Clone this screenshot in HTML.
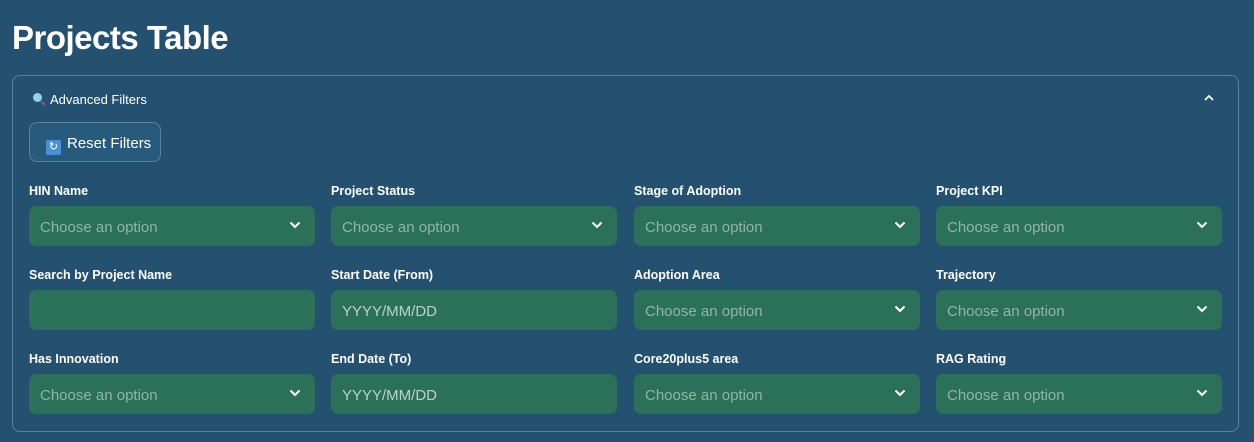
<!DOCTYPE html>
<html><head><meta charset="utf-8"><style>
*{box-sizing:border-box;margin:0;padding:0}
body{width:1254px;height:442px;background:#245170;font-family:"Liberation Sans",sans-serif;color:#fff;overflow:hidden;position:relative}
h1{position:absolute;left:12px;top:19px;font-size:33px;font-weight:bold;letter-spacing:-0.5px}
.box{position:absolute;left:12px;top:75px;width:1227px;height:357px;border:1px solid #5d7f99;border-radius:8px}
.exp{position:absolute;left:32px;top:92px;font-size:13px}
.car{position:absolute;left:1204px;top:90px;font-size:12px}
.btn{position:absolute;left:29px;top:122px;width:132px;height:40px;border:1px solid #5d7f99;border-radius:8px;background:#285a7b;font-size:15px;padding:12px 0 0 16px}
.ic{display:inline-block;width:15px;height:15px;background:#4a90d9;border-radius:2px;vertical-align:-2px;margin-right:6px;color:#fff;font-size:11px;text-align:center;line-height:15px}
.lbl{position:absolute;font-size:12.5px;font-weight:bold}
.in{position:absolute;width:286px;height:40px;background:#2b7159;border-radius:7px;font-size:15px;color:#8fb5a6;padding:13px 0 0 11px}
.in svg{position:absolute;right:14px;top:15px}
</style></head><body>
<h1>Projects Table</h1>
<div class="box"></div>
<div class="exp"><svg width="14" height="14" viewBox="0 0 14 14" style="vertical-align:-2px;margin-right:4px"><circle cx="5.5" cy="5.5" r="4.5" fill="#8fd3f0"/><line x1="9" y1="9" x2="13" y2="13" stroke="#8a4a8a" stroke-width="2.5"/></svg>Advanced Filters</div>
<div class="car"><svg width="10" height="7" viewBox="0 0 10 7"><path d="M1 6L5 2L9 6" stroke="#fff" stroke-width="1.8" fill="none"/></svg></div>
<div class="btn"><span class="ic">↻</span>Reset Filters</div>
<div id="g"></div>
<script>
const cols=[29,331,634,936];
const rows=[[190,206],[274,290],[358,374]];
const d=[["HIN Name","s"],["Project Status","s"],["Stage of Adoption","s"],["Project KPI","s"],
["Search by Project Name","t"],["Start Date (From)","d"],["Adoption Area","s"],["Trajectory","s"],
["Has Innovation","s"],["End Date (To)","d"],["Core20plus5 area","s"],["RAG Rating","s"]];
let h="";
d.forEach((x,i)=>{const c=cols[i%4],r=rows[Math.floor(i/4)];
h+=`<div class="lbl" style="left:${c}px;top:${r[0]-6}px">${x[0]}</div>`;
let inner=x[1]=="s"?'Choose an option<svg width="12" height="8" viewBox="0 0 12 8"><path d="M1.5 1.5L6 6L10.5 1.5" stroke="#fff" stroke-width="2" fill="none"/></svg>':x[1]=="d"?'<span style="color:#bcd2c9">YYYY/MM/DD</span>':'';
h+=`<div class="in" style="left:${c}px;top:${r[1]}px">${inner}</div>`;});
document.getElementById("g").innerHTML=h;
</script>
</body></html>
